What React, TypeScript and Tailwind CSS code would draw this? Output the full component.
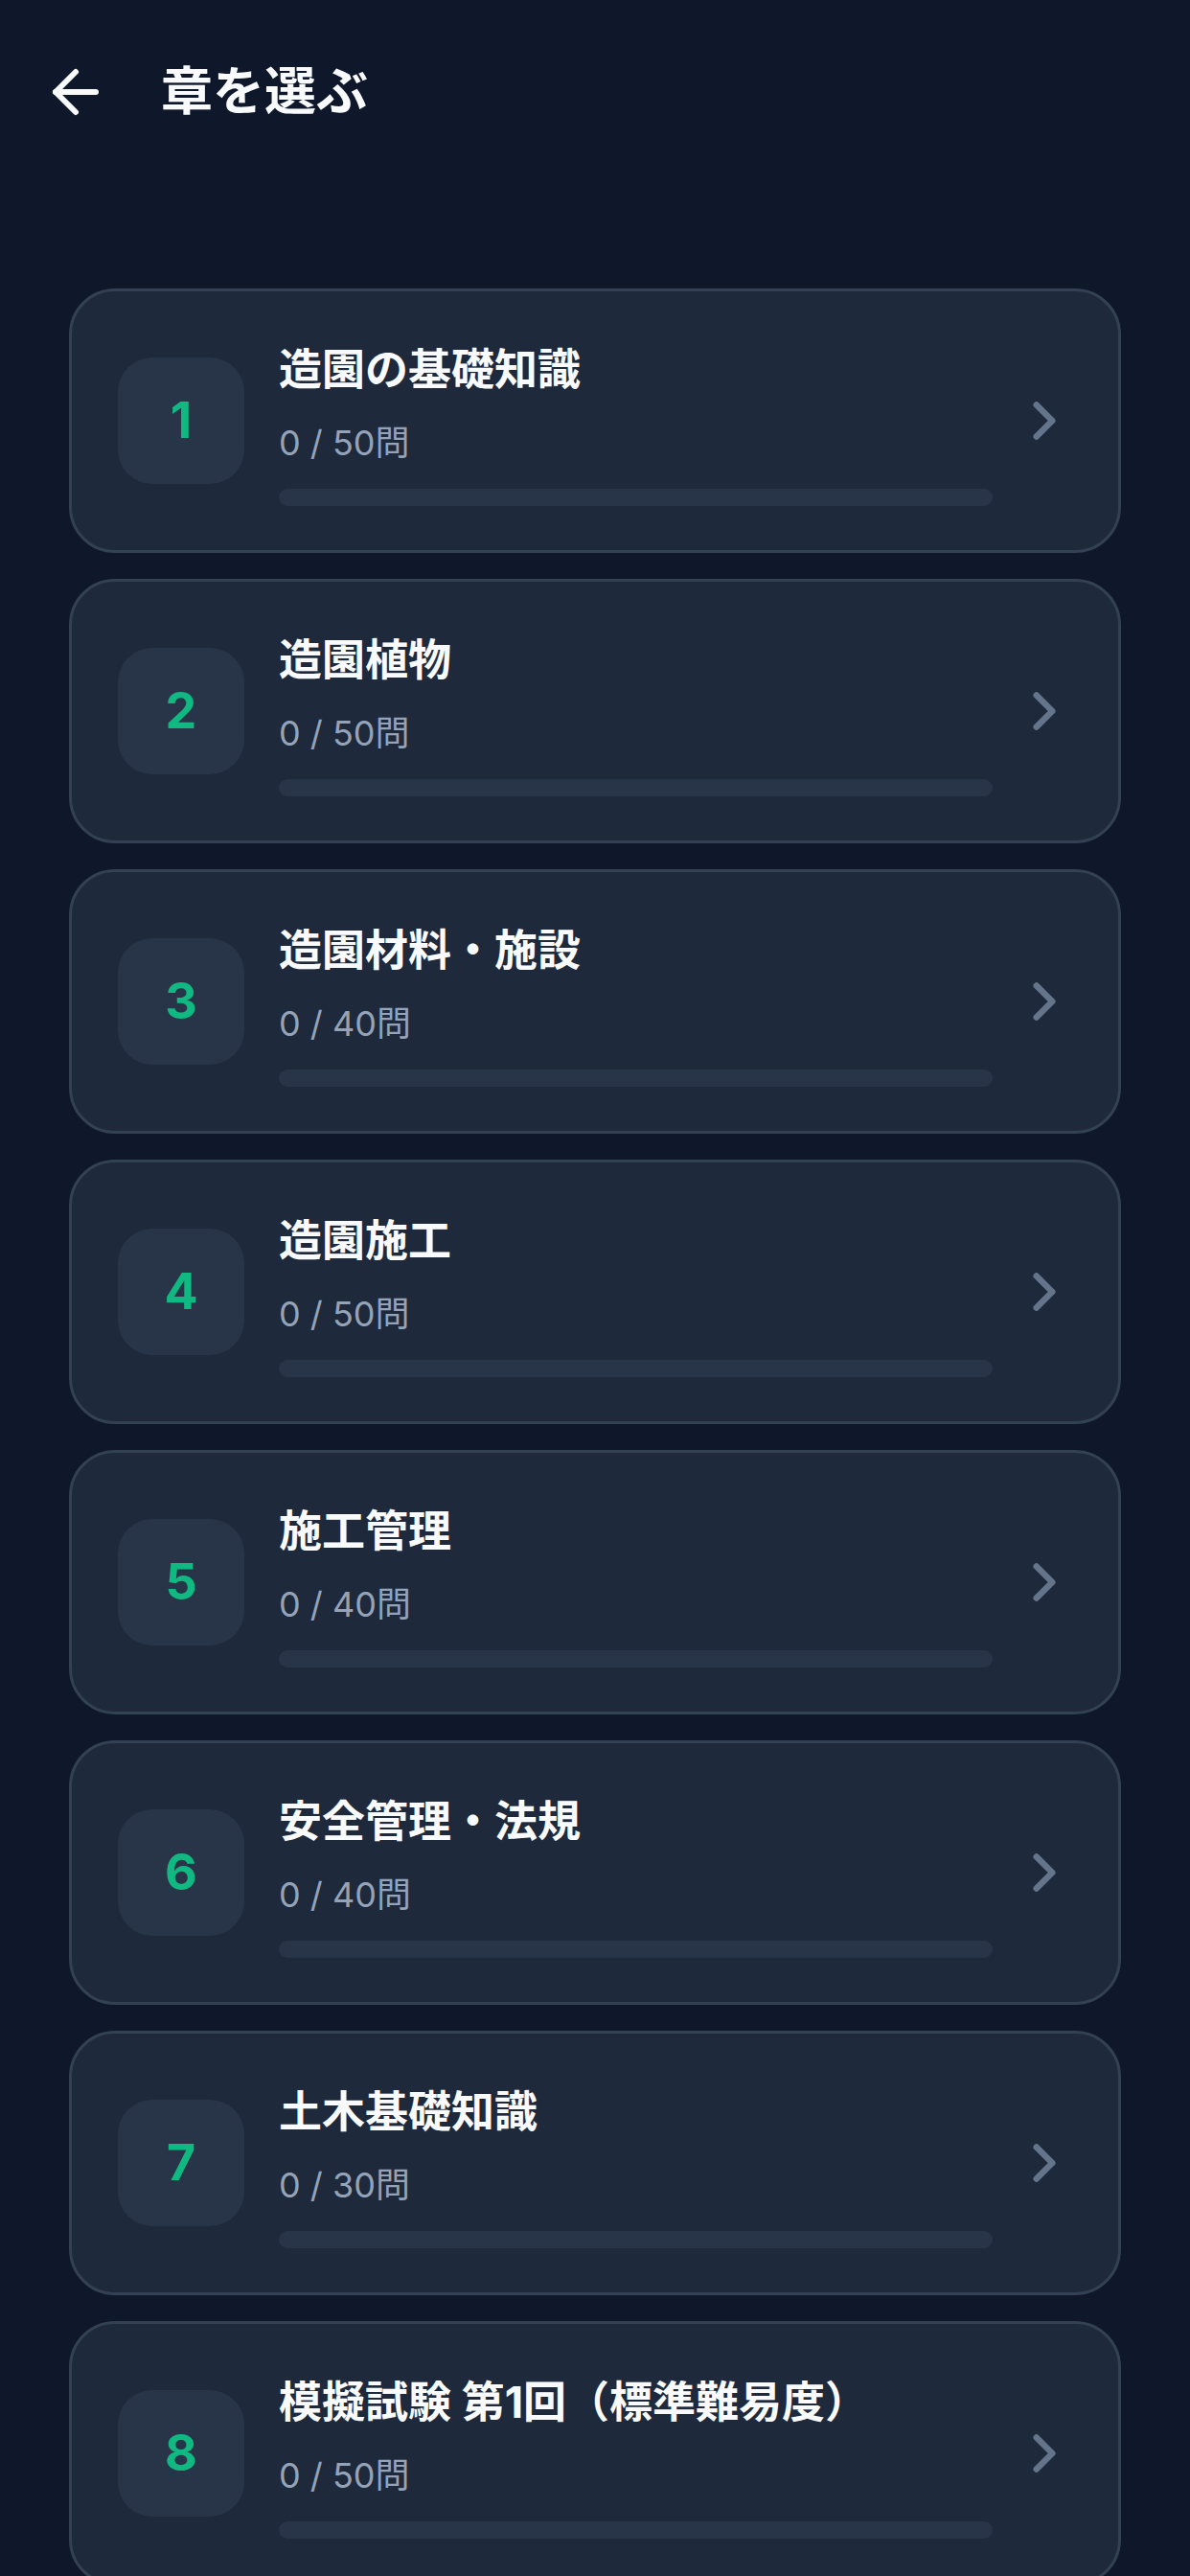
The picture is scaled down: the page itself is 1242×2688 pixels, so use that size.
import { ArrowLeft, ChevronRight } from "lucide-react";

const CHAPTERS = [
  { no: 1, title: "造園の基礎知識", total: 50 },
  { no: 2, title: "造園植物", total: 50 },
  { no: 3, title: "造園材料・施設", total: 40 },
  { no: 4, title: "造園施工", total: 50 },
  { no: 5, title: "施工管理", total: 40 },
  { no: 6, title: "安全管理・法規", total: 40 },
  { no: 7, title: "土木基礎知識", total: 30 },
  { no: 8, title: "模擬試験 第1回（標準難易度）", total: 50 },
];

const FONT = "font-['Inter','Noto_Sans_CJK_JP',sans-serif]";

export default function App() {
  return (
    <div className={`min-h-screen bg-[#0f172a] text-[#f8fafc] ${FONT}`}>
      <header className="flex h-[192px] items-center pl-[43px]">
        <button className="flex h-[72px] w-[72px] items-center justify-center">
          <ArrowLeft size={72} strokeWidth={2} className="text-[#f8fafc]" />
        </button>
        <h1 className="ml-[53px] text-[54px] font-bold leading-none">章を選ぶ</h1>
      </header>

      <main className="flex flex-col gap-[27px] px-[72px] pt-[109px]">
        {CHAPTERS.map((c) => (
          <div
            key={c.no}
            className="flex h-[276px] shrink-0 items-center rounded-[48px] border-[3px] border-[#334155] bg-[#1e293b] pl-[48px] pr-[44px]"
          >
            <div className="flex h-[132px] w-[132px] shrink-0 items-center justify-center rounded-[36px] bg-[#283548]">
              <span className="text-[52px] font-bold text-[#10b981]">{c.no}</span>
            </div>

            <div className="ml-[36px] min-w-0 flex-1 pt-[6px]">
              <h2 className="text-[45px] font-bold leading-[60px] whitespace-nowrap">{c.title}</h2>
              <p className="mt-[22px] text-[36px] leading-[48px] text-[#94a3b8]">0 / {c.total}問</p>
              <div className="mt-[24px] h-[18px] w-full rounded-full bg-[#283548]" />
            </div>

            <ChevronRight size={66} strokeWidth={2.4} className="ml-[21px] shrink-0 text-[#64748b]" />
          </div>
        ))}
      </main>
    </div>
  );
}
